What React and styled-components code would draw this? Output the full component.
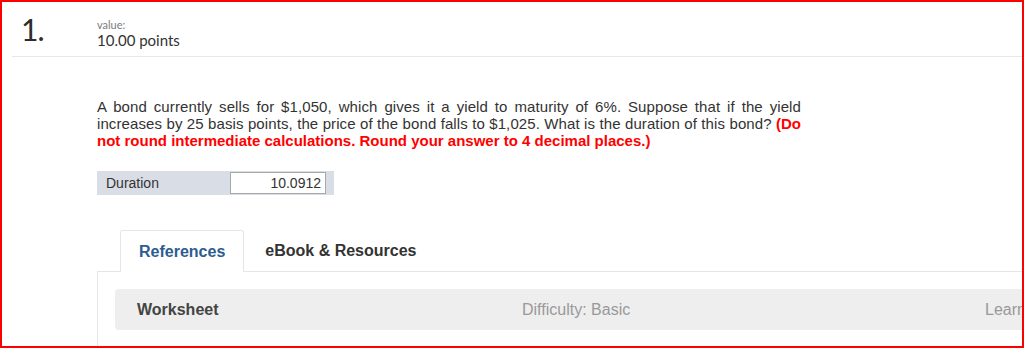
import styled, { createGlobalStyle } from "styled-components"

const Global = createGlobalStyle`
    html, body {
        margin: 0;
        padding: 0;
        background: #fff;
    }
`

const Frame = styled.div`
    width: 1024px;
    height: 348px;
    box-sizing: border-box;
    border: 2px solid #ff0000;
    overflow: hidden;
    background: #fff;
    font-family: "Liberation Sans", Arial, sans-serif;
    color: #333;
`

const Header = styled.div`
    margin-left: 10px;
    height: 55px;
    box-sizing: border-box;
    border-bottom: 1px solid #e8e8e8;
    display: flex;
    align-items: flex-start;
`

const Number = styled.div`
    width: 85px;
    padding-left: 9px;
    padding-top: 11px;
    font-family: Lato, "Open Sans", sans-serif;
    font-weight: 400;
    font-size: 30px;
    line-height: 32px;
    letter-spacing: -1px;
    color: #2d2d2d;
    box-sizing: border-box;
`

const Value = styled.div`
    padding-top: 16px;
    font-family: Lato, "Open Sans", sans-serif;
`

const ValueLabel = styled.div`
    font-size: 11px;
    line-height: 13px;
    color: #7a7a7a;
`

const Points = styled.div`
    font-size: 15px;
    line-height: 18px;
    color: #333;
`

const Body = styled.div`
    padding-left: 95px;
    padding-top: 41px;
`

const Question = styled.p`
    margin: 0;
    width: 704px;
    font-size: 15px;
    line-height: 17px;
    letter-spacing: 0.1px;
    text-align: justify;
    color: #333;
`

const Warn = styled.span`
    color: #f00;
    font-weight: bold;
    letter-spacing: 0;
`

const AnswerRow = styled.div`
    margin-top: 22px;
    width: 237px;
    height: 24px;
    background: #d9dde6;
    display: flex;
    align-items: center;
    justify-content: space-between;
    padding: 0 8px 0 9px;
    box-sizing: border-box;
    font-size: 14px;
`

const AnswerInput = styled.div`
    width: 96px;
    height: 22px;
    box-sizing: border-box;
    background: #fff;
    border: 1px solid #a9a9a9;
    text-align: right;
    padding-right: 4px;
    line-height: 20px;
    font-size: 14px;
    color: #333;
`

const TabBar = styled.div`
    margin-top: 35px;
    padding-left: 23px;
    display: flex;
    align-items: flex-end;
    height: 41px;
`

const Tab = styled.div`
    box-sizing: border-box;
    height: ${p => (p.$active ? "42px" : "41px")};
    padding: ${p => (p.$active ? "0 18px" : "0 0 0 20px")};
    margin-bottom: ${p => (p.$active ? "-1px" : "0")};
    display: flex;
    align-items: center;
    font-size: 16px;
    font-weight: bold;
    color: ${p => (p.$active ? "#2c5d8f" : "#333")};
    background: #fff;
    border: 1px solid ${p => (p.$active ? "#e6e6e6" : "transparent")};
    border-bottom: none;
    border-radius: 3px 3px 0 0;
    position: relative;
    z-index: 1;
    white-space: nowrap;
`

const Panel = styled.div`
    border-top: 1px solid #e6e6e6;
    border-left: 1px solid #e6e6e6;
    padding: 17px 0 20px 17px;
`

const Bar = styled.div`
    height: 41px;
    background: #eeeeee;
    border-radius: 4px 0 0 4px;
    display: flex;
    align-items: center;
    padding-left: 22px;
    font-size: 16px;
    white-space: nowrap;
`

const BarTitle = styled.div`
    flex: 0 0 385px;
    font-weight: bold;
    color: #444;
`

const BarMeta = styled.div`
    flex: 0 0 463px;
    color: #999;
`

export default function App() {
    return (
        <>
            <Global />
            <Frame>
                <Header>
                    <Number>1.</Number>
                    <Value>
                        <ValueLabel>value:</ValueLabel>
                        <Points>10.00 points</Points>
                    </Value>
                </Header>
                <Body>
                    <Question>
                        A bond currently sells for $1,050, which gives it a yield to maturity of 6%. Suppose that if the yield increases by 25 basis points, the price of the bond falls to $1,025. What is the duration of this bond? <Warn>(Do not round intermediate calculations. Round your answer to 4 decimal places.)</Warn>
                    </Question>
                    <AnswerRow>
                        <span>Duration</span>
                        <AnswerInput>10.0912</AnswerInput>
                    </AnswerRow>
                    <TabBar>
                        <Tab $active>References</Tab>
                        <Tab>eBook &amp; Resources</Tab>
                    </TabBar>
                    <Panel>
                        <Bar>
                            <BarTitle>Worksheet</BarTitle>
                            <BarMeta>Difficulty: Basic</BarMeta>
                            <BarMeta>Learning Objective</BarMeta>
                        </Bar>
                    </Panel>
                </Body>
            </Frame>
        </>
    )
}
